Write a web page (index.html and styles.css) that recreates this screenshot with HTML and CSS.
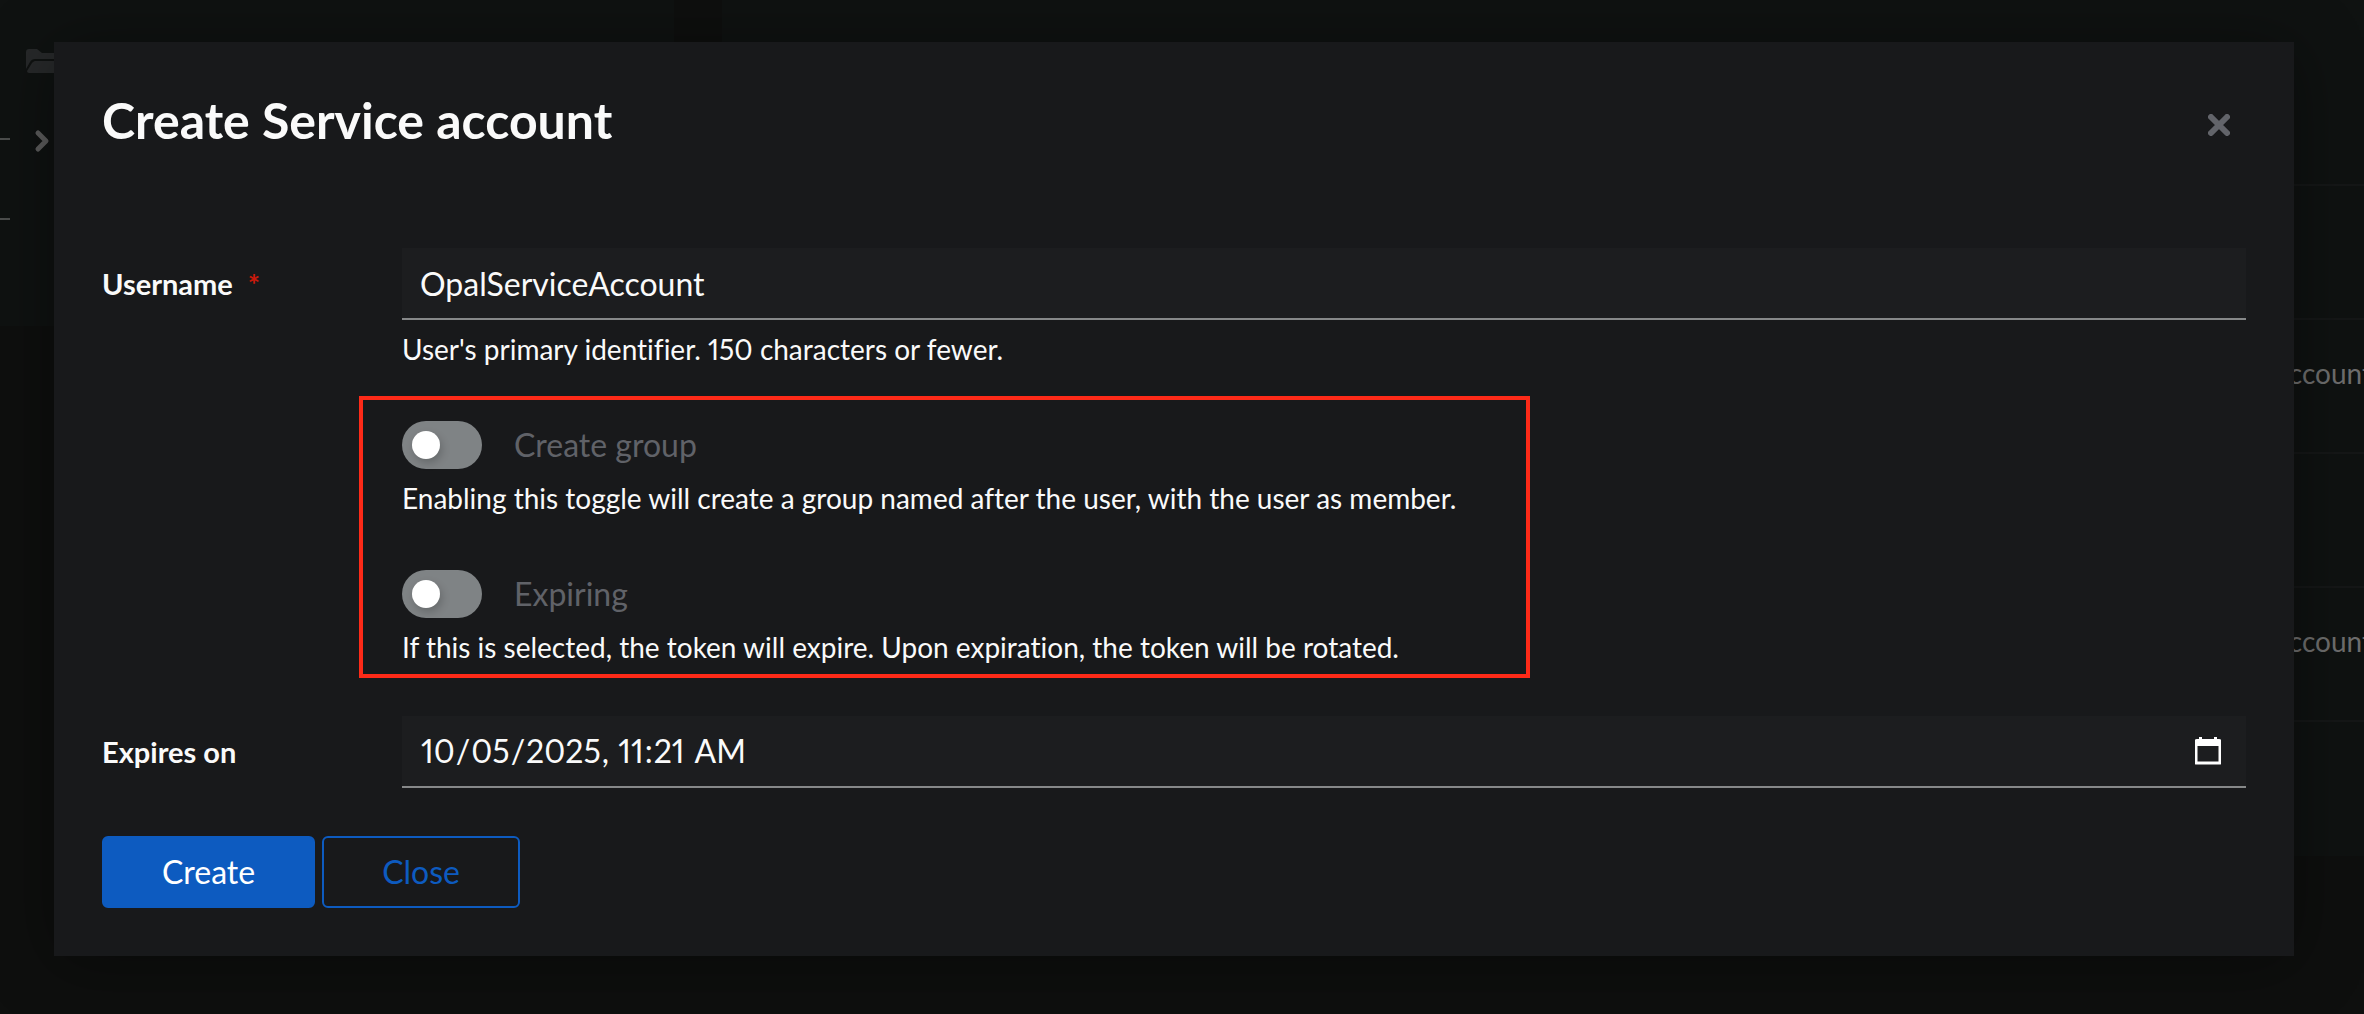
FILE: index.html
```
<!DOCTYPE html>
<html lang="en">
<head>
  <meta charset="utf-8">
  <meta name="viewport" content="width=device-width, initial-scale=1">
  <title>Create Service account</title>
  <link rel="stylesheet" href="styles.css">
</head>
<body>
  <div class="page">
    <aside class="tree">
      <div class="tree-root">
        <svg class="folder" viewBox="0 0 32 24" aria-hidden="true"><path d="M0 3a3 3 0 0 1 3-3h8l5 4h13a3 3 0 0 1 3 3v3H9c-2 0-4 1-5 3L0 20z"/><path d="M1 22L6 14c1-1 2-2 3-2h23v12H3c-1 0-2-1-2-2z"/></svg>
      </div>
      <div class="tree-branch">
        <svg class="chevron" viewBox="0 0 14 20" aria-hidden="true"><path d="M3 2l8 8-8 8"/></svg>
      </div>
    </aside>
    <main class="users">
      <div class="row row-head"></div>
      <div class="row"></div>
      <div class="row"><span>account</span></div>
      <div class="row"></div>
      <div class="row"><span>account</span></div>
      <div class="row row-last"></div>
    </main>
  </div>

  <div class="backdrop">
    <section class="modal" role="dialog" aria-modal="true" aria-labelledby="modal-title">
      <header class="modal-header">
        <h1 id="modal-title">Create Service account</h1>
        <button class="dismiss" type="button" aria-label="Close dialog">
          <svg viewBox="0 0 22 22" aria-hidden="true"><path d="M3 3l16 16M19 3L3 19"/></svg>
        </button>
      </header>
      <form class="form">
        <div class="group">
          <label class="label" for="username">Username <span class="required" aria-hidden="true">*</span></label>
          <div class="control"><input class="input" id="username" type="text" value="OpalServiceAccount" required></div>
          <p class="help">User's primary identifier. 150 characters or fewer.</p>
        </div>
        <div class="group">
          <div class="toggles">
            <div class="toggle">
              <label class="switch"><input type="checkbox" name="create_group">Create group</label>
              <p class="help">Enabling this toggle will create a group named after the user, with the user as member.</p>
            </div>
            <div class="toggle">
              <label class="switch"><input type="checkbox" name="expiring">Expiring</label>
              <p class="help">If this is selected, the token will expire. Upon expiration, the token will be rotated.</p>
            </div>
            <div class="highlight"></div>
          </div>
        </div>
        <div class="group">
          <label class="label" for="expires">Expires on</label>
          <div class="control">
            <input class="input" id="expires" type="datetime-local" value="2025-10-05T11:21">
            <svg class="calendar" viewBox="0 0 26 28" aria-hidden="true"><path class="calendar-frame" d="M1 4h24v22H1z"/><path class="calendar-top" d="M4 0h3v2h12V0h3v2h2a2 2 0 0 1 2 2v5H0V4a2 2 0 0 1 2-2h2z"/></svg>
          </div>
        </div>
        <div class="actions">
          <button class="btn btn-primary" type="submit">Create</button>
          <button class="btn btn-secondary" type="button">Close</button>
        </div>
      </form>
    </section>
  </div>
</body>
</html>
```
FILE: styles.css
```
* {
  box-sizing: border-box;
}

body {
  margin: 0;
  min-height: 100vh;
  background: #0e0f0e;
  color: #fafafa;
  font-family: Lato, "Open Sans", sans-serif;
  font-size: 28px;
  line-height: 42px;
  font-variant-ligatures: no-common-ligatures;
  font-variant-numeric: proportional-nums;
  color-scheme: dark;
  overflow: hidden;
}

h1,
p {
  margin: 0;
}

/* Page behind the dialog */
.page {
  display: grid;
  grid-template-columns: 674px 1fr;
  column-gap: 48px;
  align-items: start;
}

.tree {
  display: grid;
  grid-template-rows: 98px 82px;
  height: 326px;
  padding-top: 40px;
  background: #0f1211;
}

.tree-root {
  padding: 9px 26px;
}

.folder {
  display: block;
  width: 32px;
  height: 24px;
  fill: #27292a;
}

.tree-branch {
  width: 10px;
  border-top: 2px solid #4c4e4d;
  border-bottom: 2px solid #4c4e4d;
}

.chevron {
  display: block;
  width: 14px;
  height: 20px;
  margin: -9px 0 0 35px;
  overflow: visible;
  fill: none;
  stroke: #5c5c5c;
  stroke-width: 5;
  stroke-linecap: round;
  stroke-linejoin: round;
}

.users {
  overflow: hidden;
  background: #0f1211;
}

.row {
  display: flex;
  align-items: flex-start;
  justify-content: flex-end;
  height: 134px;
  padding-top: 32px;
  border-bottom: 2px solid #151717;
  color: #6e6e6e;
}

.row-head {
  height: 186px;
}

.row span {
  margin-right: -8px;
}

.row-last {
  border-bottom: 0;
}

/* Dialog */
.backdrop {
  position: absolute;
  inset: 0;
  padding: 42px 70px 58px 54px;
}

.modal {
  padding: 48px;
  background: #18191b;
  box-shadow: 0 6px 64px rgba(0, 0, 0, 0.4);
}

.modal-header {
  display: flex;
  justify-content: space-between;
  align-items: flex-start;
  margin-bottom: 88px;
}

.modal-header h1 {
  font-size: 50px;
  font-weight: 700;
  line-height: 60px;
}

.dismiss {
  display: grid;
  place-items: center;
  width: 54px;
  height: 70px;
  padding: 0;
  border: 0;
  background: none;
}

.dismiss svg {
  width: 22px;
  height: 22px;
  fill: none;
  stroke: #62646a;
  stroke-width: 6;
  stroke-linecap: round;
}

.form {
  display: grid;
  gap: 48px;
}

.group {
  display: grid;
  grid-template-columns: 300px 1fr;
  align-items: center;
}

.label {
  font-size: 29px;
  font-weight: 700;
}

.required {
  margin-left: 8px;
  color: #c9190b;
}

.control {
  display: flex;
  align-items: center;
  height: 72px;
  padding-right: 25px;
  border-bottom: 2px solid #868889;
  background: #1c1d1f;
}

.input {
  flex: 1;
  min-width: 0;
  height: 70px;
  padding: 0 18px;
  border: 0;
  outline: 0;
  background: none;
  color: inherit;
  font: inherit;
  font-size: 32px;
  font-variant-numeric: inherit;
}

.input::-webkit-calendar-picker-indicator {
  display: none;
}

.calendar {
  width: 26px;
  height: 28px;
}

.calendar-frame {
  fill: none;
  stroke: #fff;
  stroke-width: 3;
  stroke-linejoin: round;
}

.calendar-top {
  fill: #fff;
}

.help {
  grid-column: 2;
  margin-top: 8px;
}

.toggles {
  position: relative;
  grid-column: 2;
  display: grid;
  gap: 51px;
  padding-top: 3px;
}

.switch {
  display: flex;
  align-items: center;
  gap: 32px;
  height: 48px;
  color: #606268;
  font-size: 32px;
}

.switch input {
  appearance: none;
  display: flex;
  align-items: center;
  width: 80px;
  height: 48px;
  margin: 0;
  padding-left: 10px;
  border-radius: 24px;
  background: #7f8385;
}

.switch input::before {
  content: "";
  width: 28px;
  height: 28px;
  border-radius: 50%;
  background: #fff;
  box-shadow: 2px 4px 8px rgba(0, 0, 0, 0.2);
}

.switch input:checked::before {
  margin-left: 32px;
}

.highlight {
  position: absolute;
  top: -22px;
  bottom: -10px;
  left: -43px;
  width: 1171px;
  border: 4px solid #fd2a18;
  pointer-events: none;
}

.actions {
  display: flex;
  gap: 7px;
}

.btn {
  height: 72px;
  padding: 0 58px;
  border: 2px solid #0d5bc0;
  border-radius: 6px;
  font: inherit;
  font-size: 32px;
}

.btn-primary {
  background: #0d5bc0;
  color: #fff;
}

.btn-secondary {
  background: transparent;
  color: #0d5bc0;
}
```
